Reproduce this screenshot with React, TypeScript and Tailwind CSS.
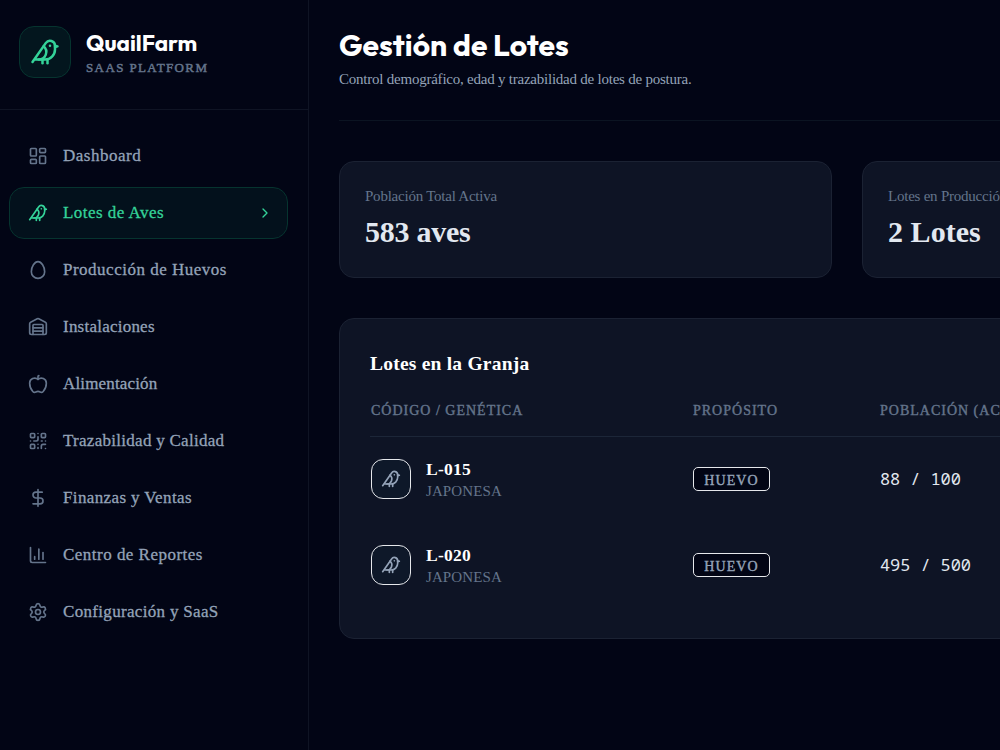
import {
  Apple,
  Bird,
  ChartColumn,
  ChevronRight,
  DollarSign,
  Egg,
  LayoutDashboard,
  QrCode,
  Settings,
  Warehouse,
  type LucideIcon,
} from "lucide-react";

const nav: { label: string; icon: LucideIcon; tracking: string; active?: boolean }[] = [
  { label: "Dashboard", icon: LayoutDashboard, tracking: "tracking-[0.5px]" },
  { label: "Lotes de Aves", icon: Bird, tracking: "tracking-[0.47px]", active: true },
  { label: "Producción de Huevos", icon: Egg, tracking: "tracking-[0.5px]" },
  { label: "Instalaciones", icon: Warehouse, tracking: "tracking-[0.23px]" },
  { label: "Alimentación", icon: Apple, tracking: "tracking-[0.15px]" },
  { label: "Trazabilidad y Calidad", icon: QrCode, tracking: "tracking-[0.28px]" },
  { label: "Finanzas y Ventas", icon: DollarSign, tracking: "tracking-[0.38px]" },
  { label: "Centro de Reportes", icon: ChartColumn, tracking: "tracking-[0.48px]" },
  { label: "Configuración y SaaS", icon: Settings, tracking: "tracking-[0.32px]" },
];

const stats = [
  { label: "Población Total Activa", value: "583 aves", tracking: "tracking-[-0.25px]" },
  { label: "Lotes en Producción", value: "2 Lotes", tracking: "tracking-[0.05px]" },
];

const lots = [
  { code: "L-015", breed: "JAPONESA", purpose: "HUEVO", population: "88 / 100" },
  { code: "L-020", breed: "JAPONESA", purpose: "HUEVO", population: "495 / 500" },
];

function Sidebar() {
  return (
    <aside className="flex h-full w-[309px] shrink-0 flex-col border-r border-[#0f1424]">
      <div className="flex h-[110px] shrink-0 items-start gap-[15px] border-b border-[#0f1424] pl-[19px] pt-[26px]">
        <div className="flex size-[52px] items-center justify-center rounded-[15px] border border-[#06342f] bg-[#03161e]">
          <Bird className="size-[30px] text-[#34d399]" strokeWidth={2} />
        </div>
        <div className="pt-[3px]">
          <div className="font-['Outfit','Lato',sans-serif] text-[22.5px] font-bold leading-[27px] text-white">
            QuailFarm
          </div>
          <div className="mt-[4px] text-[13px] leading-[16px] tracking-[1.38px] text-[#64748b] [-webkit-text-stroke:0.5px]">
            SAAS PLATFORM
          </div>
        </div>
      </div>
      <nav className="flex flex-col gap-[5px] pl-[9px] pr-5 pt-5">
        {nav.map(({ label, icon: Icon, tracking, active }) => (
          <div
            key={label}
            className={
              active
                ? "flex h-[52px] items-center gap-[15px] rounded-[15px] border border-[#06342f] bg-[#03111c] px-[18px] text-[#34d399]"
                : "flex h-[52px] items-center gap-[15px] rounded-[15px] border border-transparent px-[18px] text-[#94a3b8]"
            }
          >
            <Icon className={active ? "size-5" : "size-5 text-[#64748b]"} strokeWidth={2} />
            <span
              className={`flex-1 whitespace-nowrap text-[17px] leading-6 [-webkit-text-stroke:0.3px] ${tracking}`}
            >
              {label}
            </span>
            {active && <ChevronRight className="mr-[-4px] size-4" strokeWidth={2} />}
          </div>
        ))}
      </nav>
    </aside>
  );
}

function LotTable() {
  return (
    <section className="mt-10 h-[321px] rounded-[15px] border border-[#1b2233] bg-[#0e1425] px-[30px] pt-[30px]">
      <h2 className="text-[19.5px] font-bold leading-[30px] tracking-[0.22px] text-white">Lotes en la Granja</h2>
      <div className="mt-[6px] grid h-[52px] grid-cols-[322px_187px_1fr] items-center border-b border-[#1c2638] pl-px text-[14px] tracking-[1px] text-[#64748b] [-webkit-text-stroke:0.4px]">
        <span>CÓDIGO / GENÉTICA</span>
        <span>PROPÓSITO</span>
        <span>POBLACIÓN (ACTUAL)</span>
      </div>
      {lots.map((lot) => (
        <div key={lot.code} className="grid h-[86px] grid-cols-[322px_187px_1fr] items-center pb-[2px] pl-px">
          <div className="flex items-center gap-[15px]">
            <div className="flex size-10 items-center justify-center rounded-[12px] border border-[#e5e7eb] bg-[#0e1829]">
              <Bird className="size-5 text-[#94a3b8]" strokeWidth={2} />
            </div>
            <div className="pt-[2px]">
              <div className="pt-px text-[17.5px] font-bold leading-[21px] tracking-[0.25px] text-white">{lot.code}</div>
              <div className="text-[15px] leading-[22px] tracking-[0.1px] text-[#64748b]">{lot.breed}</div>
            </div>
          </div>
          <span className="flex h-6 w-[77px] items-center justify-center rounded-[5px] border border-[#e5e7eb] bg-[#020515] pt-[2px] text-[14px] tracking-[1.1px] text-[#94a3b8] [-webkit-text-stroke:0.4px]">
            {lot.purpose}
          </span>
          <span className="font-['Noto_Sans_Mono','DejaVu_Sans_Mono',monospace] text-[17px] tracking-[-0.1px] text-[#e2e8f0]">
            {lot.population}
          </span>
        </div>
      ))}
    </section>
  );
}

export default function App() {
  return (
    <div className="flex h-[750px] w-[1000px] overflow-hidden bg-[#020515] font-['Liberation_Serif',serif]">
      <Sidebar />
      <div className="min-w-0 flex-1 overflow-hidden">
        <main className="w-[1076px] px-[30px] pt-[25px]">
          <header className="h-[96px] border-b border-[#0b1422]">
            <h1 className="font-['Outfit','Lato',sans-serif] text-[30px] font-bold leading-[40px] tracking-[0.04px] text-white">
              Gestión de Lotes
            </h1>
            <p className="mt-[4px] text-[15px] leading-[20px] tracking-[-0.23px] text-[#94a3b8]">
              Control demográfico, edad y trazabilidad de lotes de postura.
            </p>
          </header>
          <div className="mt-10 grid grid-cols-2 gap-[30px]">
            {stats.map((s) => (
              <div
                key={s.label}
                className="h-[117px] rounded-[15px] border border-[#1b2233] bg-[#0e1425] px-[25px] pt-[23px]"
              >
                <div className="text-[15px] leading-[22px] tracking-[-0.23px] text-[#64748b]">{s.label}</div>
                <div className={`mt-[6px] text-[30px] font-bold leading-[38px] text-[#e2e8f0] ${s.tracking}`}>
                  {s.value}
                </div>
              </div>
            ))}
          </div>
          <LotTable />
        </main>
      </div>
    </div>
  );
}
